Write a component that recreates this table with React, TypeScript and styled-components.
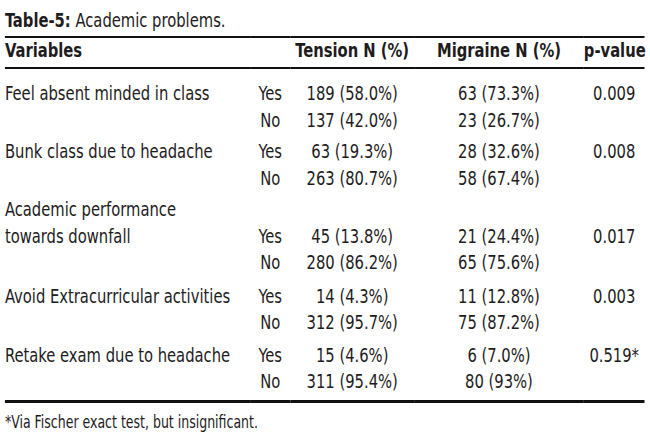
import React from 'react';
import styled, { createGlobalStyle } from 'styled-components';

// No narrow face is installed, so the condensed look of the source table
// is emulated by squeezing DejaVu Sans Condensed horizontally.
const SQUEEZE = 0.82;

const GlobalStyle = createGlobalStyle`
  html, body {
    margin: 0;
    padding: 0;
    background: #ffffff;
    overflow: hidden;
  }
  body {
    font-family: "DejaVu Sans Condensed", "DejaVu Sans", sans-serif;
    font-stretch: condensed;
    color: #1e1c1d;
  }
`;

const Viewport = styled.div`
  width: 650px;
  overflow: hidden;
`;

const Page = styled.div`
  width: 780px;
  padding: 8px 0 0 6px;
  transform: scaleX(${SQUEEZE});
  transform-origin: 0 0;
`;

const Caption = styled.div`
  font-size: 20px;
  line-height: 24px;
  margin-bottom: 4px;
  white-space: nowrap;

  b {
    font-weight: 700;
  }
`;

const Table = styled.table`
  width: 780px;
  table-layout: fixed;
  border-collapse: collapse;
  font-size: 20px;
`;

const HeadRow = styled.tr`
  border-top: 2px solid #111;
  border-bottom: 2px solid #111;
`;

const Th = styled.th<{ $align?: 'left' | 'center' }>`
  font-weight: 700;
  text-align: ${(p) => p.$align ?? 'center'};
  line-height: 25px;
  padding: 0 0 4px 0;
  white-space: nowrap;
`;

const Group = styled.tbody<{ $top: number; $last?: boolean }>`
  tr:first-child td {
    padding-top: ${(p) => p.$top}px;
  }
  ${(p) =>
    p.$last &&
    `
    border-bottom: 3px solid #111;
    tr:last-child td { padding-bottom: 5px; }
  `}
`;

const Td = styled.td<{ $align?: 'left' | 'center' }>`
  text-align: ${(p) => p.$align ?? 'center'};
  line-height: 26.5px;
  padding: 0;
  white-space: nowrap;
  vertical-align: top;
`;

const Footnote = styled.div`
  font-size: 17px;
  line-height: 20px;
  margin-top: 9px;
  white-space: nowrap;
`;

type Row = {
  label?: string;
  answer?: string;
  tension?: string;
  migraine?: string;
  p?: string;
};

const groups: { top: number; rows: Row[] }[] = [
  {
    top: 11,
    rows: [
      { label: 'Feel absent minded in class', answer: 'Yes', tension: '189 (58.0%)', migraine: '63 (73.3%)', p: '0.009' },
      { answer: 'No', tension: '137 (42.0%)', migraine: '23 (26.7%)' },
    ],
  },
  {
    top: 5,
    rows: [
      { label: 'Bunk class due to headache', answer: 'Yes', tension: '63 (19.3%)', migraine: '28 (32.6%)', p: '0.008' },
      { answer: 'No', tension: '263 (80.7%)', migraine: '58 (67.4%)' },
    ],
  },
  {
    top: 5,
    rows: [
      { label: 'Academic performance' },
      { label: 'towards downfall', answer: 'Yes', tension: '45 (13.8%)', migraine: '21 (24.4%)', p: '0.017' },
      { answer: 'No', tension: '280 (86.2%)', migraine: '65 (75.6%)' },
    ],
  },
  {
    top: 7,
    rows: [
      { label: 'Avoid Extracurricular activities', answer: 'Yes', tension: '14 (4.3%)', migraine: '11 (12.8%)', p: '0.003' },
      { answer: 'No', tension: '312 (95.7%)', migraine: '75 (87.2%)' },
    ],
  },
  {
    top: 6,
    rows: [
      { label: 'Retake exam due to headache', answer: 'Yes', tension: '15 (4.6%)', migraine: '6 (7.0%)', p: '0.519*' },
      { answer: 'No', tension: '311 (95.4%)', migraine: '80 (93%)' },
    ],
  },
];

export default function App() {
  return (
    <>
      <GlobalStyle />
      <Viewport>
        <Page>
          <Caption>
            <b>Table-5:</b> Academic problems.
          </Caption>
          <Table>
            <colgroup>
              <col style={{ width: 299 }} />
              <col style={{ width: 49 }} />
              <col style={{ width: 151 }} />
              <col style={{ width: 207 }} />
              <col style={{ width: 74 }} />
            </colgroup>
            <thead>
              <HeadRow>
                <Th $align="left">Variables</Th>
                <Th />
                <Th>Tension N (%)</Th>
                <Th>Migraine N (%)</Th>
                <Th>p-value</Th>
              </HeadRow>
            </thead>
            {groups.map((g, gi) => (
              <Group key={gi} $top={g.top} $last={gi === groups.length - 1}>
                {g.rows.map((r, ri) => (
                  <tr key={ri}>
                    <Td $align="left">{r.label}</Td>
                    <Td>{r.answer}</Td>
                    <Td>{r.tension}</Td>
                    <Td>{r.migraine}</Td>
                    <Td>{r.p}</Td>
                  </tr>
                ))}
              </Group>
            ))}
          </Table>
          <Footnote>*Via Fischer exact test, but insignificant.</Footnote>
        </Page>
      </Viewport>
    </>
  );
}
